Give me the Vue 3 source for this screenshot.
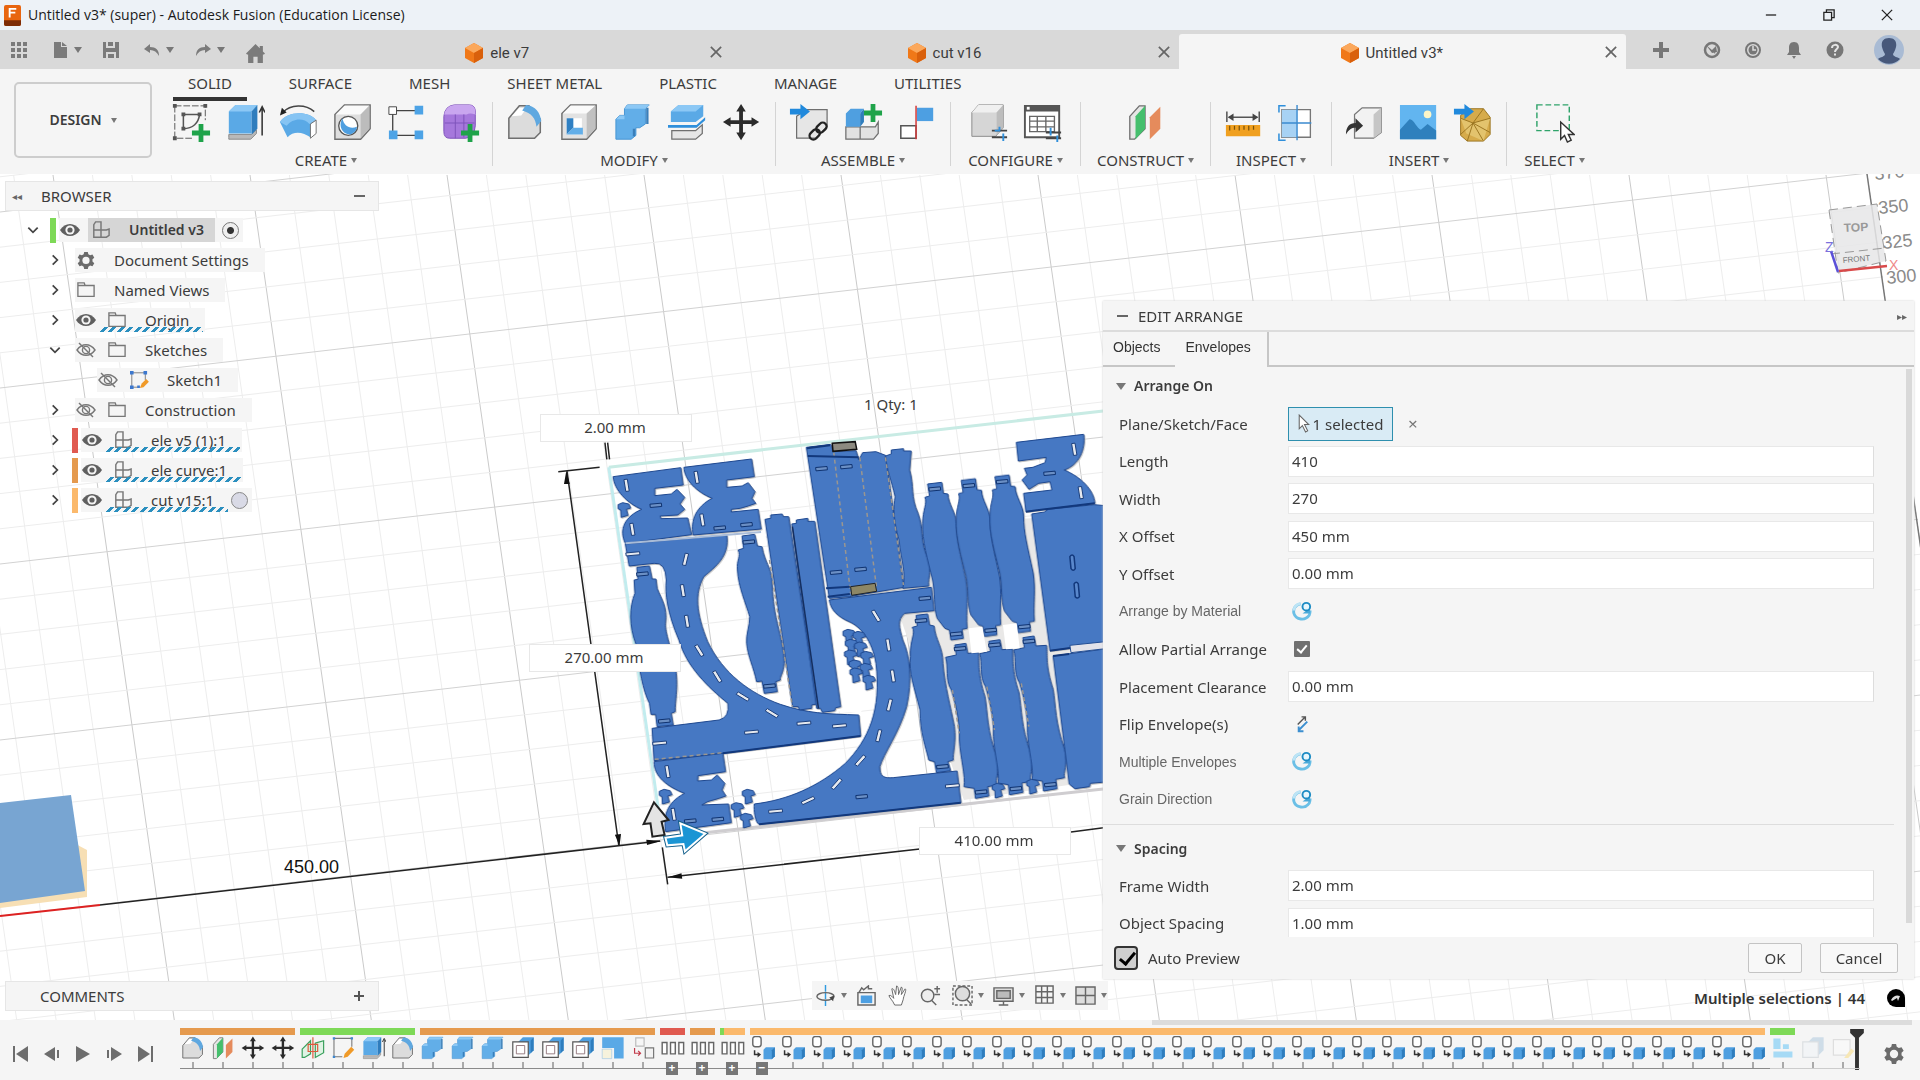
<script setup>
import { ref } from 'vue'

const GREY = '#6f6f6f'

const combine = `<path d="M14 2h23l-4 4v16l-6 4h-4v8l-5 4H2V17l4-4h5V6z" fill="#62aee8" stroke="#4593d3"/><path d="M14 2h23l-4 4H11zM6 13h5v4H2z" fill="#8cc8f5"/><path d="M35 5v17M21 27v8" stroke="#3a7fba" stroke-width="2.500" fill="none"/>`
const fillet = `<path d="M3 16L14 3h10l12 14v14l-6 6H3z" fill="#dcdcdc" stroke="${GREY}" stroke-width="1.6"/><path d="M6 14l8-9h8l-6 8z" fill="#fff"/><path d="M21 2c10 1 15 8 16 17l-5 6c-1-9-5-14-15-17z" fill="#5fa8e0"/>`
const move = `<path d="M20 1l5 8h-3v9h9v-3l8 5-8 5v-3h-9v9h3l-5 8-5-8h3v-9H9v3l-8-5 8-5v3h9V9h-3z" fill="#2b2b2b"/>`
const extrude = `<path d="M4 36v-3h24l5-5v4l-6 6H4z" fill="#b9b9b9" stroke="#888"/><path d="M4 9l7-7h23l-6 7v23H4z" fill="#5aa9e6"/><path d="M4 9l7-7h23l-6 7z" fill="#8cc8f5"/><path d="M28 9l6-7v25l-6 6z" fill="#2f7dbd"/><path d="M39 34V6m-3 4l3-6 3 6" stroke="#333" stroke-width="1.6" fill="none"/>`
const planes = `<path d="M4 14L14 3h6v24L9 38H4z" fill="#e6e6e6" stroke="${GREY}" stroke-width="1.4"/><path d="M10 14l10-11v24L10 38z" fill="#45bf6d"/><path d="M25 15L36 4v23L25 38z" fill="#e58b5c"/>`
const sketch = `<path d="M5 4h30v14M5 4v31h14" fill="none" stroke="#777" stroke-width="1.8"/><path d="M3 2h4v4H3zM33 2h4v4h-4zM3 33h4v4H3z" fill="#3c86cf"/>`

const icons = {
  sketchNew: `<path d="M4 3h32v15M4 3v34h20" fill="none" stroke="#555" stroke-dasharray="7 2"/><path d="M2 1h4v4H2zM34 1h4v4h-4zM2 35h4v4H2z" fill="#555"/><path d="M13 12h17c-1 9-7 15-17 15z" fill="none" stroke="#555" stroke-width="1.6"/><path d="M11 10h4v4h-4zM28 10h4v4h-4zM11 25h4v4h-4z" fill="#555"/><path d="M29 22h5v7h7v5h-7v7h-5v-7h-7v-5h7z" fill="#1fa34a"/>`,
  extrude, fillet, combine, move, planes, sketch,
  revolve: `<path d="M1 20C8 8 32 8 39 18l-6 18c-8-6-18-7-24 0z" fill="#5aa9e6"/><path d="M1 20C8 8 32 8 39 18l-7 4C26 15 14 16 8 24z" fill="#86c4f3"/><path d="M39 18v14l-6 5V22z" fill="#fff" stroke="${GREY}"/><path d="M4 10C12 1 28 1 37 9" fill="none" stroke="#444" stroke-width="1.6"/><path d="M1 13l2-8 5 5z" fill="#222"/>`,
  hole: `<path d="M2 12L12 2h27v25L29 38H2z" fill="#dedede" stroke="${GREY}" stroke-width="1.5"/><path d="M3 12L12 3h26l-9 9z" fill="#fafafa"/><path d="M29 12l9-9v24l-9 10z" fill="#bcbcbc"/><circle cx="16" cy="24" r="10" fill="#fff" stroke="#555" stroke-width="1.4"/><path d="M10 16c-5 8 0 17 8 17 4-1 7-4 7-8-7 3-14-1-15-9z" fill="#4f9fe0"/>`,
  pattern: `<path d="M6 8h26M6 8v26h26" stroke="#444" stroke-width="1.4" fill="none"/><path d="M2 4h8v8H2z" fill="#fff" stroke="#444"/><path d="M29 3h9v9h-9zM2 29h9v9H2zM29 29h9v9h-9z" fill="#4da3e6"/>`,
  form: `<path d="M3 14Q4 3 14 2h16q7 0 6 10v12q-1 12-10 13H9q-6 0-6-7z" fill="#a678dc" stroke="#7b4fb8"/><path d="M3 14Q4 3 14 2h16q7 0 6 10-6-2-9 0H3z" fill="#c9a6ef"/><path d="M4 21h31M15 12v25M24 12v24" stroke="#7d52ba" fill="none"/><path d="M28 22h5v7h7v5h-7v7h-5v-7h-7v-5h7z" fill="#1fa34a"/>`,
  shell: `<path d="M2 11L11 2h27v25L28 38H2z" fill="#e2e2e2" stroke="${GREY}" stroke-width="1.5"/><path d="M3 11L11 3h26l-9 8z" fill="#fafafa"/><path d="M28 11l9-8v24l-9 10z" fill="#c0c0c0"/><path d="M7 16h16v17H7z" fill="#fff"/><path d="M7 16h7v10l-7 7z" fill="#2f80c3"/><path d="M7 33l7-7h10v7z" fill="#62aee8"/>`,
  split: `<path d="M3 9l8-7h26v12l-8 6H3z" fill="#5aa9e6"/><path d="M3 9l8-7h26l-8 7z" fill="#8cc8f5"/><path d="M0 23h30l9-8v3l-9 8H0z" fill="#2f8fdb"/><path d="M4 29h25l7-6v9l-7 6H4z" fill="#e6e6e6" stroke="${GREY}" stroke-width="1.3"/>`,
  insertLink: `<path d="M8 14L18 7h22v18L28 37H8z" fill="#e6e6e6" stroke="${GREY}" stroke-width="1.3"/><path d="M1 6h11V1l10 8-10 8v-5H1z" fill="#2089dc"/><g fill="none" stroke="#222" stroke-width="2.4"><rect x="30" y="20" width="8" height="12" rx="4" transform="rotate(45 34 26)"/><rect x="23" y="27" width="8" height="12" rx="4" transform="rotate(45 27 33)"/></g>`,
  newComp: `<path d="M3 25h15v13H3zM18 25h16l3-5v12l-5 6H18z" fill="#e2e2e2" stroke="${GREY}" stroke-width="1.3"/><path d="M3 11l5-5h14l-4 5v14H3z" fill="#4f9fe0"/><path d="M18 11l4-5v14l-4 5z" fill="#2f7dbd"/><path d="M29 1h5v7h7v5h-7v7h-5v-7h-7V8h7z" fill="#1fa34a"/>`,
  joint: `<path d="M21 5h17v14H21z" fill="#4d9fe2"/><path d="M4 24h16v13H4z" fill="#fff" stroke="#555" stroke-width="1.6"/><path d="M20 3v35" stroke="#d23b3b" stroke-width="1.6"/>`,
  configure: `<path d="M3 10l7-8h26v24l-8 9H3z" fill="#d6d6d6" stroke="#8a8a8a"/><path d="M3 10l7-8h26l-7 8z" fill="#f0f0f0"/><path d="M29 10l7-8v24l-7 8z" fill="#bdbdbd"/><path d="M24 29h16M24 36h16" stroke="#444" stroke-width="2"/><path d="M27 29h5v-4M36 32v8" stroke="#2f8fdb" stroke-width="2" fill="none"/>`,
  configTable: `<path d="M2 3h36v33H2z" fill="#fff" stroke="#555" stroke-width="2"/><path d="M2 2h36v7H2z" fill="#555"/><path d="M4 4h3v3H4z" fill="#fff"/><path d="M7 14h26v16H7zM7 19h26M7 25h26M15 14v16M24 14v16" stroke="#666" stroke-width="1.4" fill="none"/><path d="M24 31h16M24 37h16" stroke="#444" stroke-width="2"/><path d="M29 26v8M36 34v7" stroke="#2f8fdb" stroke-width="2"/>`,
  measure: `<path d="M2 23h36v12H2z" fill="#f0a020"/><path d="M6 24v5m5-5v4m5-4v5m5-5v4m5-4v5m5-5v4" stroke="#7a5208" stroke-width="1.3"/><path d="M3 9v11M37 9v11M5 15h30" stroke="#555" stroke-width="1.6"/><path d="M4 15l6-4v8zM36 15l-6-4v8z" fill="#444"/>`,
  section: `<path d="M4 7h30v29H4z" fill="#fff" stroke="#777" stroke-width="1.4"/><path d="M4 7h16v29H4z" fill="#a7d2f4"/><path d="M4 21h31M20 2v37" stroke="#3b8bd0" stroke-width="1.5"/><path d="M1 10V3h7M1 32v7h7" fill="none" stroke="#2f8fdb" stroke-width="1.6"/>`,
  insertDerive: `<path d="M10 12l8-7h20v26l-8 6H10z" fill="#f2f2f2" stroke="#777" stroke-width="1.3"/><path d="M30 12l8-7v26l-8 6z" fill="#c6c6c6"/><path d="M1 33c0-8 4-12 10-12v-5l8 8-8 7v-5c-4 0-7 2-10 7z" fill="#333"/>`,
  picture: `<path d="M1 2h38v36H1z" fill="#62b5f0"/><circle cx="30" cy="12" r="4" fill="#fdf6c8"/><path d="M1 38V28l10-11c4-1 8 10 12 11l7-6 9 7v9z" fill="#2f80bd"/>`,
  mesh: `<path d="M8 13l10-7h14l7 9v18l-7 7H15l-7-6z" fill="#d6ab4b" stroke="#9a7420"/><path d="M8 16l13 5 18-5-7 24-18-8z" fill="#e3c36d"/><path d="M8 16l13 5 18-5M21 21l11-15M21 21l-6 19M8 33l13-12 18 10M32 40L21 21" stroke="#9a7420" fill="none"/><path d="M1 6h11V1l10 8-10 8v-5H1z" fill="#2089dc"/>`,
  select: `<path d="M2 2h34v27H2z" fill="none" stroke="#2fa36a" stroke-width="1.5" stroke-dasharray="6 3"/><path d="M27 20v18l4-4 3 7 4-2-3-6h6z" fill="#fff" stroke="#333" stroke-width="1.5"/>`,
  sketchEdit: sketch + `<path d="M21 37l2-7 11-12 5 5-11 12z" fill="#f09a28"/>`,
  mirror: `<path d="M2 22L16 8v22L6 36H2zM24 12l14-4v20l-14 8z" fill="#dff3e4" stroke="#39a05c" stroke-width="2"/><path d="M12 14h16v12H12zM20 2v36" fill="none" stroke="#dc5a3c" stroke-width="2"/>`,
  offsetBox: `<path d="M12 10l8-8h18v22l-8 8z" fill="#4f9fe0"/><path d="M33 8l5-6v22l-5 5z" fill="#2f7dbd"/><path d="M3 10h26v26H3z" fill="#fff" stroke="#555" stroke-width="2"/><path d="M9 16h14v14H9z" fill="none" stroke="#8b6f75" stroke-width="1.500"/>`,
  corner: `<path d="M2 2h36v36H22V20H2z" fill="#5aa9e6"/><path d="M2 22h16v16H2z" fill="#f6f2dc" stroke="#9ac4e4"/>`,
  linked: `<path d="M8 3h14v14H8z" fill="#f6f6f6" stroke="#bbb" stroke-width="2"/><path d="M24 20h14v17H24z" fill="#f2f2f2" stroke="#777" stroke-width="2"/><path d="M6 20v9h10m-4-4l4 4-4 4" fill="none" stroke="#c23a4a" stroke-width="2"/>`,
  bundle: `<path d="M2 11h8v19H2zM16 11h8v19h-8zM30 11h8v19h-8z" fill="#fff" stroke="#666" stroke-width="2.4"/>`,
  arranged: `<rect x="3" y="1" width="14" height="17" rx="4" fill="#fff" stroke="#666" stroke-width="2.4"/><path d="M6 24v7h6" stroke="#333" stroke-width="2.500" fill="none"/><path d="M11 27l6 4-6 5z" fill="#333"/><path d="M21 23l4-4h15v15l-5 5H21z" fill="#4f9fe0"/><path d="M35 24l5-5v15l-5 5z" fill="#2f7dbd"/>`,
  arrangeFeature: `<path d="M4 4h12v18H4zM20 14h10v8H20zM4 26h32v10H4z" fill="#a6daf5"/>`,
  ghostBox: `<path d="M12 10l8-8h18v22l-8 8z" fill="#cfdde8"/><path d="M3 10h26v26H3z" fill="#f2f4f6" stroke="#dcdfe2" stroke-width="2"/>`,
  ghostSketch: `<path d="M4 6h28v26H4z" fill="#f8f8f8" stroke="#dedede" stroke-width="2"/><path d="M22 37l12-16 5 4-10 12z" fill="#f7e7b5"/>`,
}

const tabs = ['SOLID', 'SURFACE', 'MESH', 'SHEET METAL', 'PLASTIC', 'MANAGE', 'UTILITIES']
const groups = [
  { name: 'CREATE', tools: ['sketchNew', 'extrude', 'revolve', 'hole', 'pattern', 'form'] },
  { name: 'MODIFY', tools: ['fillet', 'shell', 'combine', 'split', 'move'] },
  { name: 'ASSEMBLE', tools: ['insertLink', 'newComp', 'joint'] },
  { name: 'CONFIGURE', tools: ['configure', 'configTable'] },
  { name: 'CONSTRUCT', tools: ['planes'] },
  { name: 'INSPECT', tools: ['measure', 'section'] },
  { name: 'INSERT', tools: ['insertDerive', 'picture', 'mesh'] },
  { name: 'SELECT', tools: ['select'] },
]
const docs = ['ele v7', 'cut v16', 'Untitled v3*']

const glyphs = {
  eye: `<path d="M0 10C5 2 15 2 20 10 15 18 5 18 0 10z" fill="#5f5f5f"/><circle cx="10" cy="10" r="4.6" fill="#f5f5f5"/><circle cx="10" cy="10" r="2.6" fill="#5f5f5f"/>`,
  hidden: `<path d="M1 10C6 3 14 3 19 10 14 17 6 17 1 10z" fill="none" stroke="#777" stroke-width="1.4"/><circle cx="10" cy="10" r="3.6" fill="none" stroke="#777" stroke-width="1.4"/><path d="M3 3l14 14" stroke="#777" stroke-width="1.4"/>`,
  folder: `<path d="M1 5V2h7l1 3M1 5h18v12H1z" fill="none" stroke="#777" stroke-width="1.5"/>`,
  gear: `<path d="M8 1h4l.6 2.6 2 1.2 2.600-.8 2 3.400-2 1.900v2.400l2 1.900-2 3.400-2.600-.8-2 1.200L12 20H8l-.6-2.600-2-1.200-2.600.8-2-3.400 2-1.900V9.300l-2-1.900 2-3.400 2.600.8 2-1.200z" fill="#6b6b6b"/><circle cx="10" cy="10.500" r="4" fill="#f5f5f5"/>`,
  component: `<path d="M2 10V4l2-3h6v9zM2 10h8v8H2zM10 18v-8h6l3-1v7l-3 2z" fill="none" stroke="#777" stroke-width="1.6"/>`,
  sketch: `<path d="M2 2h15v8M2 2v16h8" fill="none" stroke="#777"/><path d="M0 0h4v4H0zM15 0h4v4h-4zM0 16h4v4H0zM8 16h3v3H8z" fill="#3c78cf"/><path d="M11 19l2-5 5-5 3 3-6 6z" fill="#f09a28"/>`,
}
const tree = [
  { text: 'Untitled v3', level: 'root', open: true, tag: '#7ed957', eye: 'eye', icon: 'component', active: true },
  { text: 'Document Settings', level: 'child', icon: 'gear' },
  { text: 'Named Views', level: 'child', icon: 'folder' },
  { text: 'Origin', level: 'child', eye: 'eye', icon: 'folder', fresh: true },
  { text: 'Sketches', level: 'child', open: true, eye: 'hidden', icon: 'folder' },
  { text: 'Sketch1', level: 'leaf', eye: 'hidden', icon: 'sketch' },
  { text: 'Construction', level: 'child', eye: 'hidden', icon: 'folder' },
  { text: 'ele v5 (1):1', level: 'child', tag: '#e05a50', eye: 'eye', icon: 'component', fresh: true },
  { text: 'ele curve:1', level: 'child', tag: '#e59a4e', eye: 'eye', icon: 'component', fresh: true },
  { text: 'cut v15:1', level: 'child', tag: '#fbb96c', eye: 'eye', icon: 'component', fresh: true, ball: true },
]

const fields = ref([
  { id: 'length', label: 'Length', kind: 'text', value: '410' },
  { id: 'width', label: 'Width', kind: 'text', value: '270' },
  { id: 'xoff', label: 'X Offset', kind: 'text', value: '450 mm' },
  { id: 'yoff', label: 'Y Offset', kind: 'text', value: '0.00 mm' },
  { id: 'material', label: 'Arrange by Material', kind: 'sync' },
  { id: 'partial', label: 'Allow Partial Arrange', kind: 'check', value: true },
  { id: 'clearance', label: 'Placement Clearance', kind: 'text', value: '0.00 mm' },
  { id: 'flip', label: 'Flip Envelope(s)', kind: 'flip' },
  { id: 'multi', label: 'Multiple Envelopes', kind: 'sync' },
  { id: 'grain', label: 'Grain Direction', kind: 'sync' },
])
const spacing = ref([
  { id: 'frame', label: 'Frame Width', value: '2.00 mm' },
  { id: 'object', label: 'Object Spacing', value: '1.00 mm' },
])
const preview = ref(true)

const timeline = [
  { color: '#e59a4e', items: ['fillet', 'planes', 'move', 'move'] },
  { color: '#7ed957', items: ['mirror', 'sketchEdit', 'extrude', 'fillet'] },
  { color: '#e59a4e', items: ['combine', 'combine', 'combine', 'offsetBox', 'offsetBox', 'offsetBox', 'corner', 'linked'] },
  { color: '#e05a50', items: ['bundle'], box: '+' },
  { color: '#e59a4e', items: ['bundle'], box: '+' },
  { color: 'linear-gradient(90deg, #7ed957 4px, #fbb96c 4px)', items: ['bundle'], box: '+' },
  { color: '#fbb96c', items: Array(34).fill('arranged'), box: '−' },
  { color: '#7ed957', items: ['arrangeFeature'] },
  { color: 'transparent', items: ['ghostBox', 'ghostSketch'] },
]

const steps = (n) => Array.from({ length: n }, (_, i) => i)
const columns = steps(56).map((i) => ({ x: -144 - 197 + (i * 197) / 5, major: i % 5 === 0 })).filter((c) => c.x < 1870)
const lines = steps(46).map((i) => ({ y: 36 + (i * 176) / 5, major: i % 5 === 0 }))

const slots = [
  [278, 316, 'v'], [293, 448, 'v'], [461, 292, 'v'], [476, 420, 'v'], [432, 538, 'r'], [425, 632, 'v'], [436, 724, 'v'],
  [468, 812, 'd'], [515, 890, 'd'], [582, 950, 'e'], [658, 1000, 'e'], [742, 1030, 'h'], [835, 1038, 'h'], [605, 1057, 'h'],
  [365, 1090, 'h'], [295, 522, 'h'], [930, 708, 'd'], [962, 795, 'v'], [974, 888, 'v'], [965, 975, 'r'], [937, 1067, 'r'],
  [890, 1142, 's'], [828, 1212, 's'], [753, 1262, 't'], [668, 1294, 'h'], [1130, 1218, 'h'], [1448, 208, 'v'],
  [1465, 338, 'v'], [385, 1175, 'v'], [401, 1303, 'v'],
]
const darkSlots = [
  [355, 376], [522, 444], [592, 434], [788, 266], [853, 260], [826, 577], [890, 568], [1058, 655], [893, 1250], [1384, 280],
  [445, 1323], [517, 1318], [320, 582], [598, 486], [1084, 327], [1173, 317], [1260, 305], [1048, 722], [1150, 806], [1240, 795],
  [1330, 784], [1140, 762], [1230, 751], [1318, 740], [377, 1023], [652, 918], [1104, 1160], [1205, 1236], [1296, 1226], [1386, 1214],
]
const turn = { v: 82, r: 102, d: 62, e: 35, h: -6, s: -52, t: -28 }
const pegs = [[860, 770], [886, 776], [866, 800], [890, 808], [864, 832], [906, 836], [876, 862], [904, 872], [878, 886], [912, 908], [597, 1250], [568, 1290], [592, 1322], [272, 390], [380, 1250], [1250, 1232], [1340, 1220]]
</script>

<template>
  <div class="app">
    <header class="titlebar">
      <svg class="logo" viewBox="0 0 18 22"><rect width="18" height="22" rx="2" fill="#e8650f" /><path d="M0 16h18v4q0 2-2 2H2q-2 0-2-2z" fill="#7c2c06" /><path d="M6 13V4h7M6 8h6" stroke="#fff" stroke-width="2" fill="none" /></svg>
      <span class="grow">Untitled v3* (super) - Autodesk Fusion (Education License)</span>
      <button aria-label="Minimize"><svg viewBox="0 0 14 14"><path d="M1 7h12" /></svg></button>
      <button aria-label="Restore"><svg viewBox="0 0 14 14"><path d="M1 4h9v9H1zM4 4V1h9v9h-3" /></svg></button>
      <button aria-label="Close"><svg viewBox="0 0 14 14"><path d="M1 1l12 12M13 1L1 13" /></svg></button>
    </header>

    <div class="docbar">
      <div class="quick">
        <button aria-label="Data panel"><svg viewBox="0 0 16 16"><path d="M0 0h4v4H0zM6 0h4v4H6zM12 0h4v4h-4zM0 6h4v4H0zM6 6h4v4H6zM12 6h4v4h-4zM0 12h4v4H0zM6 12h4v4H6zM12 12h4v4h-4z" /></svg></button>
        <button class="drop" aria-label="File"><svg viewBox="0 0 16 16"><path d="M2 0h7v5h6v11H2zM10 0l5 4h-5z" /></svg><i class="caret"></i></button>
        <button aria-label="Save"><svg viewBox="0 0 16 16"><path d="M0 0h3v6h9V0h4v16h-3v-6H3v6H0zM5 0h5v4H5zM5 12h6v4H5z" /></svg></button>
        <button class="drop" aria-label="Undo"><svg viewBox="0 0 16 16"><path d="M6 2v3c6 0 9 3 9 9-2-4-5-6-9-6v3L0 7z" /></svg><i class="caret"></i></button>
        <button class="drop" aria-label="Redo"><svg viewBox="0 0 16 16"><path d="M10 2v3c-6 0-9 3-9 9 2-4 5-6 9-6v3l6-4z" /></svg><i class="caret"></i></button>
        <button class="home" aria-label="Home"><svg viewBox="0 0 18 18"><path d="M9 0l4 4V2h3v5l2 2-1 1h-1v8h-5v-6H7v6H2v-8H1L0 9z" /></svg></button>
      </div>
      <div class="docs">
        <div v-for="(d, i) in docs" :key="d" class="doc" :class="{ current: i === 2 }">
          <span class="docname"><svg viewBox="0 0 18 20"><path d="M9 0l9 5v10l-9 5-9-5V5z" fill="#f07818" /><path d="M9 0l9 5-9 5-9-5z" fill="#fba85c" /><path d="M9 10l9-5v10l-9 5z" fill="#d9600c" /></svg>{{ d }}</span>
          <button class="x" aria-label="Close tab"><svg viewBox="0 0 14 14"><path d="M1 1l12 12M13 1L1 13" /></svg></button>
        </div>
      </div>
      <div class="account">
        <button class="add" aria-label="New tab"><svg viewBox="0 0 18 18"><path d="M7 1h4v6h6v4h-6v6H7v-6H1V7h6z" /></svg></button>
        <button aria-label="Extensions"><svg viewBox="0 0 18 18"><circle cx="9" cy="9" r="7" fill="none" stroke="#777" stroke-width="2.500" /><path d="M3 4l6 5 4-4 1 6-5 1zM9 9l4-1-1 5z" /></svg></button>
        <button aria-label="Job status"><svg viewBox="0 0 18 18"><circle cx="9" cy="9" r="7" fill="none" stroke="#777" stroke-width="2" /><circle cx="9" cy="9" r="4.500" /><path d="M9 5v4h3" stroke="#ddd" fill="none" stroke-width="1.500" /></svg></button>
        <button aria-label="Notifications"><svg viewBox="0 0 18 18"><path d="M9 1c4 0 5 3 5 6v4l2 3H2l2-3V7c0-3 1-6 5-6zM7 15h4l-2 3z" /></svg></button>
        <button aria-label="Help"><svg viewBox="0 0 18 18"><circle cx="9" cy="9" r="8.500" /><path d="M6 7c0-4 6-4 6-1 0 2-3 2-3 5m0 1.500v2" stroke="#e5e5e5" stroke-width="2" fill="none" /></svg></button>
        <svg class="avatar" viewBox="0 0 30 30"><circle cx="15" cy="15" r="15" fill="#a9bbd4" /><path d="M15 3c6 0 8 4 7 9-1 4-2 5-3 7 0 3 5 3 7 5a15 15 0 0 1-22 0c2-2 7-2 7-5-1-2-2-3-3-7-1-5 1-9 7-9z" fill="#47587a" /></svg>
      </div>
    </div>

    <div class="ribbon">
      <button class="workspace">DESIGN <i class="caret"></i></button>
      <div class="ribbonmain">
        <nav class="tabs">
          <button v-for="(t, i) in tabs" :key="t" :class="{ on: i === 0 }">{{ t }}</button>
        </nav>
        <div class="groups">
          <div v-for="g in groups" :key="g.name" class="group">
            <div class="tools">
              <button v-for="t in g.tools" :key="t" :aria-label="t"><svg viewBox="0 0 42 42" v-html="icons[t]"></svg></button>
            </div>
            <button class="gname">{{ g.name }}<i class="caret"></i></button>
          </div>
        </div>
      </div>
    </div>

    <main class="canvas">
      <svg class="scene" viewBox="0 174 1920 846" preserveAspectRatio="xMidYMid slice">
        <g fill="none">
          <path v-for="c in columns" :key="'c' + c.x" :d="`M${c.x} 175L${c.x + 122} 1025`" :stroke="c.major ? '#cacaca' : '#ededed'" />
          <path v-for="l in lines" :key="'l' + l.y" :d="`M0 ${l.y}L1990 ${l.y - 229}`" :stroke="l.major ? '#d2d2d2' : '#ededed'" />
          <path d="M1867 174L1990 1030" stroke="#777" stroke-width="1.500" />
        </g>
        <path d="M1868 172L1990 1020h80V150z" fill="#fff" />
        <g class="ticks">
          <text transform="translate(1875 180) rotate(-6)">370</text>
          <text transform="translate(1879 214) rotate(-6)">350</text>
          <text transform="translate(1883 249) rotate(-6)">325</text>
          <text transform="translate(1887 284) rotate(-6)">300</text>
        </g>

        <path d="M0 804L87 850V897L0 908z" fill="#f7dfb4" />
        <path d="M0 803L71 795 85 891 0 903z" fill="#78a5d2" />
        <path d="M0 916L100 905" stroke="#d22" stroke-width="2" />
        <text class="dim" x="284" y="873">450.00</text>
        <path d="M100 905L660 841" stroke="#222" stroke-width="1.500" />

        <g transform="translate(520 380) scale(.38265 .33333)" class="sheet">
          <path d="M232 262L1530 92" stroke="#c8ebe4" stroke-width="3" />
          <path d="M232 262L372 1370" stroke="#c2ecee" stroke-width="3" />
          <path d="M375 1372L1530 1226" stroke="#cfcdd0" stroke-width="3" />
          <path d="M640 470L1525 400V1200L1160 1260 990 700z" fill="#e9e8e7" />
          <path d="M640 500L700 980 890 1000 940 860 860 730 800 660z" fill="#fff" />

          <g class="parts">
            <path d="M243 290L420 263 426 315 352 325V347L395 342 410 328 430 352 418 372 430 388 412 405 366 408 368 416 438 414 448 464 275 490C258 450 272 410 318 388C280 370 246 330 243 290z" />
            <path d="M428 262L605 237 612 290 540 300V322L580 318 596 308 614 335 606 355 616 370 596 378 575 385 552 388V396L622 388 630 447 452 465C445 420 460 380 502 355C460 335 430 300 428 262z" />
            <path d="M275 492L540 465C548 530 510 560 480 590C455 640 460 700 490 785C530 880 600 940 680 973C750 1000 800 1002 885 1005L890 1068 530 1120 350 1142 345 1045 520 1020Q548 1012 543 970C490 920 435 860 415 780C385 700 378 640 382 600Q380 545 350 550L285 558z" />
            <path d="M305 562L338 558 345 597 355 597 358 625C370 660 385 680 380 730C378 760 395 800 408 880C412 930 405 960 405 995L395 1000 400 1035 358 1040 354 1003 342 1003 338 970C320 930 312 870 302 790C285 740 285 680 300 640L298 600 308 598z" />
            <path d="M580 468L613 463 620 498 632 500C640 550 655 560 658 600C660 650 662 680 672 730C682 780 690 810 690 850C688 880 678 890 680 900L668 905 672 935 638 940 632 903 618 905C610 860 595 830 592 790C590 760 600 740 600 710C590 670 570 620 568 570C565 540 578 530 570 510L584 505z" />
            <path d="M640 418L655 415V405L685 402 688 410 702 410 775 972 762 975V985L730 990 727 980 712 980z" />
            <path d="M710 432L722 430V420L752 415V424L770 424 838 980 825 983 822 992 790 997 785 985 775 985z" />
            <path d="M748 202L812 193 818 215 878 212 885 240 895 218 930 215 955 226 1003 622 860 650 808 655z" />
            <path d="M955 228L970 222V210L1002 206V213L1022 213 1018 270C1030 320 1020 350 1040 400C1055 450 1045 470 1060 520C1080 570 1065 590 1068 618L1000 625C1010 580 995 540 990 480C975 420 975 380 980 350C970 300 958 270 955 228z" />
            <path v-for="n in 3" :key="'u' + n" :transform="`translate(${(n - 1) * 88} ${(1 - n) * 11})`" d="M1065 312L1102 307 1106 340 1118 342C1118 370 1140 400 1140 430C1140 480 1150 520 1165 600C1172 650 1165 690 1168 745L1155 748 1158 775 1126 780 1122 750 1110 745 1090 715C1080 680 1085 640 1078 600C1065 540 1050 480 1052 430C1052 390 1065 370 1058 352L1070 348z" />
            <path d="M1035 706L1065 702 1070 735 1082 738C1085 780 1105 800 1105 850C1110 920 1125 980 1135 1040C1140 1090 1130 1120 1132 1140L1118 1145 1125 1172 1088 1178 1083 1145 1068 1140C1060 1100 1045 1060 1045 990C1030 920 1015 880 1020 830C1018 780 1035 760 1025 742L1038 738z" />
            <path v-for="n in 3" :key="'d' + n" :transform="`translate(${(n - 1) * 89} ${(1 - n) * 11})`" d="M1136 795L1165 790 1170 820 1198 818C1200 850 1195 880 1215 950C1222 1000 1220 1050 1245 1130C1255 1180 1240 1200 1245 1215L1222 1220 1225 1248 1190 1255 1187 1225 1160 1220C1165 1190 1150 1130 1148 1080C1150 1020 1135 960 1127 930C1110 900 1120 860 1112 832L1140 825z" />
            <path d="M1297 187L1473 163C1478 210 1460 255 1422 270C1465 290 1500 330 1502 370L1322 395 1316 340 1390 330 1385 305 1355 310 1330 328 1312 300 1325 285 1318 265 1340 262 1372 248 1375 232 1302 243z" />
            <path d="M1337 402L1370 396 1380 388 1500 374 1540 378V790L1385 812z" />
            <path d="M1393 828L1540 805V1205L1490 1210 1488 1220 1450 1226 1435 1212z" />
            <path d="M808 660L1075 622 1082 692 1005 700C985 720 990 740 1000 780C1020 830 1025 900 1010 980C990 1060 950 1120 940 1160C940 1190 950 1195 975 1193L1142 1173 1152 1268 625 1333C615 1330 610 1290 612 1272C700 1260 780 1220 850 1150C910 1080 945 990 930 850C920 780 890 740 860 725C830 710 812 690 808 660z" />
            <path d="M350 1145L530 1120 537 1175 465 1187 464 1203 500 1200 515 1185 535 1210 528 1230 538 1248 520 1255 490 1265 475 1275 545 1272 552 1328 380 1355C375 1310 380 1270 430 1240C385 1220 350 1190 350 1145z" />
            <path v-for="(p, i) in pegs" :key="'p' + i" :transform="`translate(${p[0]} ${p[1]})`" d="M-16 -16L-4 -22 12 -18 17 -6 6 -2 10 16 -8 22 -9 0 -16 -4z" />
          </g>
          <path d="M276 490L630 456" stroke="#a9bcd8" stroke-width="2" />
          <g fill="none" stroke="#9a9690" stroke-width="1.500" stroke-dasharray="4 3">
            <path d="M820 218L864 640M888 232L932 625M955 232L1002 615M352 1138L530 1118M652 540L712 980M1130 930L1148 1060M1220 920L1240 1050M1310 910L1330 1040" />
            <path d="M712 440L780 985" stroke="#152f60" stroke-dasharray="none" />
          </g>
          <path d="M816 190L876 185 880 208 818 214z" fill="#8c8a80" stroke="#111" stroke-width="1.500" />
          <path d="M864 620L928 610 932 634 867 646z" fill="#8d8766" stroke="#222" />
          <path d="M750 205L810 196M752 228L885 232M800 625L862 620M804 650L862 642M1385 812L1530 790M1393 828L1435 822M625 1333L1152 1268M890 1068L530 1120M1322 395L1502 370" fill="none" stroke="#12387c" stroke-width="2" />
          <path d="M1172 745L1208 740 1220 815 1180 820zM1262 735L1298 730 1306 805 1270 808z" fill="#fff" />
          <path d="M1437 796L1530 785V806L1440 818z" fill="#e3e3ea" stroke="#234e93" />
          <rect v-for="(s, i) in slots" :key="'s' + i" x="-18" y="-5" width="36" height="9" fill="#e6e9ee" stroke="#1c3f7c" :transform="`translate(${s[0]} ${s[1]}) rotate(${turn[s[2]]})`" />
          <rect v-for="(s, i) in darkSlots" :key="'k' + i" x="-15" y="-5" width="30" height="10" fill="#6b8fc4" stroke="#0f326f" :transform="`translate(${s[0]} ${s[1]}) rotate(-6)`" />
          <path d="M1437 530Q1443 520 1448 530L1451 566Q1446 576 1440 566zM1448 612Q1454 602 1459 612L1462 650Q1457 658 1451 650z" fill="#5a88cc" stroke="#12387c" stroke-width="1.500" />

          <g stroke="#222" stroke-width="1.500" fill="none">
            <path d="M100 275L208 262M123 275L258 1395M222 188L227 238M229 188L234 238M372 1402L386 1513M386 1492L1045 1407M1440 1356L1540 1341" />
          </g>
          <path d="M121 272L130 312 115 312zM260 1398L248 1364 264 1362zM370 1383L330 1379 332 1395zM386 1492L422 1480 424 1496z" fill="#111" />
          <path d="M350 1267L323 1332 341 1330 346 1370 378 1365 370 1325 388 1320z" fill="#e4e4e4" stroke="#222" stroke-width="2" />
          <path d="M380 1373L424 1366 419 1330 484 1361 431 1414 427 1392 385 1396z" fill="#1b95d4" stroke="#14608c" stroke-width="4" />
          <path d="M380 1373L424 1366 419 1330 484 1361 431 1414 427 1392 385 1396z" fill="#1b95d4" stroke="#fff" stroke-width="2" />
        </g>
      </svg>

      <div class="qty">1 Qty: 1</div>
      <input class="dimbox frame" aria-label="Frame width" value="2.00 mm" />
      <input class="dimbox height" aria-label="Envelope width" value="270.00 mm" />
      <input class="dimbox length" aria-label="Envelope length" value="410.00 mm" />

      <svg class="cube" viewBox="0 0 100 100">
        <path d="M22 23L70 17 79 74 31 86z" fill="#e6e6e8" fill-opacity=".85" stroke="#999" stroke-dasharray="9 5" />
        <path d="M24 67L78 61" stroke="#999" stroke-dasharray="9 5" fill="none" />
        <path d="M32 84L80 79" stroke="#d94a4a" stroke-width="2.500" /><path d="M24 64L31 85" stroke="#5a50d8" stroke-width="2.500" />
        <text x="37" y="45" transform="rotate(-3 37 45)" class="face">TOP</text>
        <text x="36" y="76" transform="rotate(-5 36 76)" class="small">FRONT</text>
        <text x="18" y="65" fill="#7a70dc" class="axis">Z</text><text x="82" y="83" fill="#e88" class="axis">X</text>
      </svg>

      <section class="browser">
        <div class="bar"><span class="fold">◂◂</span><span class="grow">BROWSER</span><button aria-label="Collapse"><i class="minus"></i></button></div>
        <ul>
          <li v-for="n in tree" :key="n.text" :class="n.level">
            <button class="chev" :class="{ open: n.open, none: n.level === 'leaf' }" aria-label="Expand"><svg viewBox="0 0 12 12"><path d="M4 2l4 4-4 4" /></svg></button>
            <i v-if="n.tag" class="tag" :style="{ background: n.tag }"></i>
            <div class="node" :class="{ active: n.active }">
              <svg v-if="n.eye" class="eye" viewBox="0 0 20 20" v-html="glyphs[n.eye]"></svg>
              <div class="label" :class="{ fresh: n.fresh }">
                <svg viewBox="0 0 20 20" v-html="glyphs[n.icon]"></svg>
                <span>{{ n.text }}</span>
              </div>
              <input v-if="n.active" type="radio" name="activate" checked aria-label="Active component" />
              <i v-if="n.ball" class="ball"></i>
            </div>
          </li>
        </ul>
      </section>

      <section class="comments bar"><span class="grow">COMMENTS</span><button aria-label="Add comment"><svg viewBox="0 0 12 12"><path d="M6 1v10M1 6h10" stroke="#555" stroke-width="2" /></svg></button></section>

      <div class="nav">
        <button aria-label="Orbit"><svg viewBox="0 0 22 22"><path d="M11 0v22" stroke="#2f9be0" stroke-width="1.500" stroke-dasharray="7 1" /><ellipse cx="11" cy="12" rx="9" ry="4" /><path d="M15 13l4 4 1-6z" fill="#444" stroke="none" /></svg><i class="caret"></i></button>
        <button aria-label="Look at"><svg viewBox="0 0 22 22"><path d="M2 8h18v13H2zM3 8l3-5 2 2 5-4v3h4" /><path d="M5 11h12v8H5z" fill="#4d9fe2" stroke="none" /></svg></button>
        <button aria-label="Pan"><svg viewBox="0 0 22 22"><path d="M7 21C5 16 1 13 1 11c2-1 4 2 5 3L4 4c2-1 3 3 4 6l1-9c2 0 2 5 2 9l3-8c2 1 0 5 0 8l4-6c2 1-2 8-2 11l-2 6z" fill="#fff" stroke-width="1" /></svg></button>
        <button aria-label="Zoom"><svg viewBox="0 0 22 22"><circle cx="8" cy="11" r="6.500" fill="#eee" /><path d="M12 16l5 5M18 1v7M15 4h6M15 10h6" /></svg></button>
        <button aria-label="Fit"><svg viewBox="0 0 22 22"><path d="M1 1h20v20H1z" stroke-dasharray="3 2" /><circle cx="11" cy="9" r="7.500" fill="#ddd" /><path d="M15 15l5 5" /></svg><i class="caret"></i></button>
        <button aria-label="Display settings"><svg viewBox="0 0 22 22"><path d="M1 3h20v14H1z" fill="#ddd" /><path d="M4 6h14v8H4z" fill="#bbb" /><path d="M6 21h10M11 17v4" /></svg><i class="caret"></i></button>
        <button aria-label="Grid"><svg viewBox="0 0 22 22"><path d="M2 1h18v18H2zM8 1v18M14 1v18M2 7h18M2 13h18" /></svg><i class="caret"></i></button>
        <button aria-label="Viewports"><svg viewBox="0 0 22 22"><path d="M1 2h20v18H1zM11 2v18M1 11h20" fill="#ddd" /></svg><i class="caret"></i></button>
      </div>

      <p class="status">Multiple selections | 44 <svg viewBox="0 0 18 18"><path d="M9 0a9 9 0 0 1 9 9v9H9A9 9 0 0 1 9 0z" /><path d="M4 11c3-5 6-5 9-4l-2 5-1-3-5 3z" fill="#ddd" /></svg></p>

      <form class="dialog" @submit.prevent>
        <div class="dhead"><i class="minus"></i><span class="grow">EDIT ARRANGE</span><span class="fold">▸▸</span></div>
        <div class="dtabs"><button type="button">Objects</button><button type="button" class="sel">Envelopes</button><span class="grow rule"></span></div>
        <div class="dbody">
          <h3><i class="tri"></i>Arrange On</h3>
          <div class="rows">
            <div class="row">
              <label for="plane">Plane/Sketch/Face</label>
              <button id="plane" type="button" class="picked"><svg viewBox="0 0 12 18"><path d="M1 1v13l3-3 3 6 2-1-3-6h4z" /></svg>1 selected</button>
              <button type="button" class="clear" aria-label="Clear">×</button>
            </div>
            <div v-for="f in fields" :key="f.id" class="row" :class="f.kind">
              <label :for="f.id">{{ f.label }}</label>
              <input v-if="f.kind === 'text'" :id="f.id" v-model="f.value" type="text" />
              <input v-else-if="f.kind === 'check'" :id="f.id" v-model="f.value" type="checkbox" />
              <button v-else :id="f.id" type="button" class="ic">
                <svg v-if="f.kind === 'sync'" viewBox="0 0 22 22"><path d="M9 3C3 4 1 9 2 13c2 7 12 8 16 2 1-2 1-3 1-5" fill="none" stroke="#6bbfe6" stroke-width="3" /><path d="M2 10c0-4 3-7 7-7" fill="none" stroke="#bde4f5" stroke-width="3" /><path d="M11 13h8V7z" fill="#4ba9d8" /><circle cx="15" cy="6" r="4" fill="#e8f6fc" stroke="#1e8cc4" stroke-width="2" /></svg>
                <svg v-else viewBox="0 0 22 22"><path d="M6 11l8-8m-4 0h4v4" fill="none" stroke="#555" stroke-width="1.500" /><path d="M16 8l-9 9m0-4v5h5" fill="none" stroke="#3c8fd0" stroke-width="2" /></svg>
              </button>
            </div>
          </div>
          <h3 class="second"><i class="tri"></i>Spacing</h3>
          <div class="rows pair">
            <div v-for="f in spacing" :key="f.id" class="row text"><label :for="f.id">{{ f.label }}</label><input :id="f.id" v-model="f.value" type="text" /></div>
          </div>
          <i class="thumb"></i>
        </div>
        <div class="dfoot">
          <input id="auto" v-model="preview" type="checkbox" /><label for="auto" class="grow">Auto Preview</label>
          <button type="button">OK</button><button type="button">Cancel</button>
        </div>
      </form>
    </main>

    <footer class="timeline">
      <i class="hscroll"></i>
      <div class="play">
        <button aria-label="First"><svg viewBox="0 0 16 16"><path d="M0 0h2v16H0zM15 0v16L3 8z" /></svg></button>
        <button aria-label="Back"><svg viewBox="0 0 16 16"><path d="M11 1v14L0 8zM13 4h2v8h-2z" /></svg></button>
        <button aria-label="Play"><svg viewBox="0 0 16 16"><path d="M1 0l14 8-14 8z" /></svg></button>
        <button aria-label="Forward"><svg viewBox="0 0 16 16"><path d="M5 1v14l11-7zM1 4h2v8H1z" /></svg></button>
        <button aria-label="Last"><svg viewBox="0 0 16 16"><path d="M14 0h2v16h-2zM1 0v16l12-8z" /></svg></button>
      </div>
      <div class="track">
        <div v-for="(g, i) in timeline" :key="i" class="tgroup">
          <i class="strip" :style="{ background: g.color }"></i>
          <div class="cells">
            <div v-for="(t, k) in g.items" :key="k" class="cell">
              <svg viewBox="0 0 42 42" v-html="icons[t]"></svg>
              <b v-if="g.box && k === 0">{{ g.box }}</b><i v-else class="tick"></i>
            </div>
          </div>
        </div>
        <svg class="marker" viewBox="0 0 14 42"><path d="M0 0h14v4l-5 5v33H5V9L0 4z" fill="#333" /></svg>
      </div>
      <button class="settings" aria-label="Timeline settings"><svg viewBox="0 0 20 21" v-html="glyphs.gear"></svg></button>
    </footer>
  </div>
</template>

<style>
body { margin: 0; background: #fff; }
</style>

<style scoped>
* { box-sizing: border-box; }
.app { display: flex; flex-direction: column; min-height: 100vh; font-family: "Noto Sans", sans-serif; font-size: 15px; line-height: 20px; color: #3c3c3c; overflow: hidden; }
button { background: none; border: 0; padding: 0; margin: 0; font: inherit; color: inherit; display: flex; align-items: center; justify-content: center; }
input { font: inherit; color: inherit; margin: 0; }
svg { display: block; flex: none; }
.grow { flex: 1; }
.caret { width: 0; height: 0; border: 4px solid transparent; border-top: 6px solid #777; border-bottom: 0; }

.titlebar { height: 30px; background: #edf2f7; display: flex; align-items: center; padding: 0 20px 0 4px; font-family: "Open Sans", sans-serif; font-size: 14px; color: #1b1b1b; }
.titlebar .logo { width: 17px; height: 21px; margin-right: 7px; }
.titlebar button { width: 26px; margin-left: 32px; }
.titlebar button svg { width: 12px; height: 12px; fill: none; stroke: #222; stroke-width: 1.500; }

.docbar { height: 39px; background: #d9d9d9; display: flex; align-items: stretch; font-family: Roboto, sans-serif; }
.quick { width: 284px; display: flex; align-items: center; padding-left: 11px; gap: 25px; }
.quick svg { width: 16px; height: 16px; fill: #7b7b7b; }
.quick .drop { gap: 6px; margin-right: -4px; }
.quick .home { padding-top: 8px; }
.quick .home svg { width: 19px; height: 19px; }
.docs { flex: 1; display: flex; padding-top: 4px; }
.doc { flex: 1; display: flex; align-items: center; padding-right: 9px; border-radius: 3px 3px 0 0; }
.doc.current { background: #f5f5f5; }
.docname { flex: 1; display: flex; align-items: center; justify-content: center; gap: 7px; padding-top: 2px; }
.docname svg { width: 18px; height: 20px; }
.x svg { width: 12px; height: 12px; fill: none; stroke: #666; stroke-width: 2; }
.account { width: 294px; display: flex; align-items: center; padding-left: 26px; gap: 23px; padding-right: 16px; }
.account svg { width: 18px; height: 18px; fill: #777; }
.account .add { margin-right: 10px; }
.account .avatar { width: 30px; height: 30px; margin-left: auto; }

.ribbon { height: 105px; background: #f5f5f5; display: flex; padding-left: 14px; }
.workspace { width: 138px; height: 76px; margin-top: 13px; border: 2px solid #cdcdcd; border-radius: 5px; font-size: 14px; font-weight: 600; gap: 9px; }
.workspace .caret { border-width: 5px 3px 0; }
.ribbonmain { display: flex; flex-direction: column; padding-left: 6px; }
.tabs { display: flex; gap: 57px; height: 33px; padding-left: 30px; }
.tabs button { height: 32px; padding-top: 2px; padding-bottom: 6px; position: relative; }
.tabs .on::after { content: ""; position: absolute; left: -15px; right: -15px; bottom: 0; height: 4px; background: #333; }
.groups { display: flex; }
.group { padding: 0 6px; border-left: 1px solid #d4d4d4; min-width: 121px; height: 64px; display: flex; flex-direction: column; align-items: center; }
.group:first-child { border: 0; padding-right: 4px; }
.group:nth-child(4), .group:nth-child(5) { min-width: 130px; }
.group:last-child { min-width: 96px; }
.tools { display: flex; }
.tools button { width: 54px; height: 42px; }
.tools svg { width: 40px; height: 40px; }
.gname { gap: 4px; height: 28px; padding-top: 6px; }
.gname .caret { border-width: 5px 3px 0; }

.canvas { flex: 1; position: relative; min-height: 846px; overflow: hidden; background: #fff; }
.scene { position: absolute; inset: 0; width: 100%; height: 100%; }
.sheet path, .sheet rect { vector-effect: non-scaling-stroke; }
.parts { fill: #4678c3; stroke: #1d478f; stroke-width: 1; filter: drop-shadow(2px 3px 2px #bbb); }
.ticks text { font: 18px "Liberation Sans", sans-serif; fill: #8a8a8a; }
.dim { font: 18px "Liberation Sans", sans-serif; fill: #111; }
.dimbox { position: absolute; width: 152px; height: 28px; background: #fff; border: 1px solid #e8e8e8; text-align: center; padding: 0 2px 2px 0; }
.dimbox.frame { left: 540px; top: 240px; }
.dimbox.height { left: 529px; top: 470px; }
.dimbox.length { left: 919px; top: 653px; }
.qty { position: absolute; left: 864px; top: 220px; }
.cube { position: absolute; right: 13px; top: 13px; width: 100px; height: 100px; font-family: "Liberation Sans", sans-serif; fill: none; }
.cube .face { font-size: 12px; font-weight: 700; fill: #999; }
.cube .small { font-size: 8px; fill: #777; }
.cube .axis { font-size: 14px; }

.bar { display: flex; align-items: center; height: 30px; background: #f5f5f5; border: 1px solid #e6e6e6; padding: 0 13px 0 6px; }
.fold { font-size: 10px; color: #666; width: 29px; }
.minus { width: 11px; height: 2px; background: #666; display: block; }
.browser { position: absolute; left: 5px; top: 7px; width: 374px; }
.browser ul { list-style: none; margin: 0; padding: 4px 0 0; }
.browser li { display: flex; align-items: center; height: 30px; }
.root { padding-left: 20px; }
.child { padding-left: 42px; }
.leaf { padding-left: 64px; }
.chev { width: 16px; }
.chev svg { width: 14px; height: 14px; fill: none; stroke: #444; stroke-width: 1.500; }
.chev.open { transform: rotate(90deg); }
.chev.none { visibility: hidden; }
.tag { width: 6px; height: 25px; margin: 0 -7px 0 9px; z-index: 1; }
.tag + .node { margin-left: 10px; }
.node { margin-left: 12px; height: 24px; background: #f5f5f5; display: flex; align-items: center; padding-right: 4px; }
.node svg { width: 20px; height: 20px; margin-left: 1px; }
.eye + .label { margin-left: 8px; }
.label { display: flex; align-items: center; gap: 18px; height: 24px; padding: 0 12px 0 2px; margin-left: -2px; position: relative; }
.label svg { width: 20px; height: 18px; }
.active .label { background: #d6d6d6; font-size: 14px; font-weight: 600; padding: 0 11px 0 2px; }
.label.fresh::after { content: ""; position: absolute; left: -4px; right: -2px; bottom: 0; height: 5px; background: repeating-linear-gradient(135deg, transparent 0 3px, #2a8fbf 3px 6px); }
.node input { width: 17px; height: 17px; margin-left: 7px; appearance: none; border: 1px solid #777; border-radius: 50%; background: radial-gradient(circle, #333 0 3px, #eee 4px); }
.ball { width: 17px; height: 17px; border-radius: 50%; margin-left: 5px; border: 1px solid #888; background: #d9dae6; }
.comments { position: absolute; left: 5px; bottom: 9px; width: 374px; padding-left: 34px; }
.comments svg { width: 12px; height: 12px; }

.nav { position: absolute; left: 812px; bottom: 10px; height: 29px; padding: 0 3px; background: #f5f5f5; display: flex; align-items: center; gap: 11px; }
.nav button { gap: 5px; }
.nav svg { width: 21px; height: 21px; fill: none; stroke: #666; stroke-width: 1.500; }
.nav .caret { border-width: 5px 3px 0; margin-right: -2px; }
.status { position: absolute; right: 15px; bottom: 12px; margin: 0; display: flex; align-items: center; gap: 22px; font-weight: 600; color: #333; }
.status svg { width: 18px; height: 18px; }

.dialog { position: absolute; right: 6px; top: 127px; width: 811px; height: 678px; background: #f5f5f5; display: flex; flex-direction: column; box-shadow: 0 0 2px #ccc; }
.dhead { display: flex; align-items: center; height: 31px; padding-left: 14px; gap: 10px; border-bottom: 2px solid #dcdcdc; flex: none; }
.dhead .fold { width: 17px; }
.dtabs { display: flex; height: 35px; flex: none; font-family: "Liberation Sans", Arial, sans-serif; font-size: 14px; color: #333; }
.dtabs button { padding: 0 15px 3px 10px; border-bottom: 2px solid #c6c6c6; }
.dtabs .sel { border: 0; border-right: 2px solid #c6c6c6; padding: 0 16px 5px 10px; }
.rule { border-bottom: 2px solid #c6c6c6; }
.dbody { flex: 1; min-height: 0; overflow: hidden; position: relative; padding: 9px 40px 0 16px; }
.thumb { position: absolute; right: 2px; top: 2px; bottom: 14px; width: 6px; background: #d9d9d9; }
h3 { margin: 0 0 0 -3px; font-size: 14px; font-weight: 600; height: 20px; display: flex; align-items: center; gap: 8px; }
.tri { border: 5px solid transparent; border-top: 7px solid #777; border-bottom: 0; }
.rows { display: grid; grid-auto-rows: 1fr; height: 413px; margin-top: 9px; }
.rows.pair { height: 75px; margin-top: 8px; }
.second { border-top: 1px solid #ddd; margin: 6px -20px 0 -16px; padding: 13px 0 0 13px; height: 35px; }
.row { display: flex; align-items: center; }
.row label { width: 169px; flex: none; }
.row.sync label { font-family: "Liberation Sans", Arial, sans-serif; font-size: 14px; color: #666; }
.row input[type="text"] { flex: 1; min-width: 0; height: 31px; border: 1px solid #e8e8e8; border-right-color: #ddd; background: #fff; padding: 0 3px 1px; }
.picked { width: 105px; height: 34px; border: 1px solid #2e8fae; background: #d9ebf5; gap: 2px; }
.picked svg { width: 13px; height: 19px; fill: #fff; stroke: #666; }
.clear { font-size: 17px; color: #777; margin-left: 15px; }
.row input[type="checkbox"] { appearance: none; width: 16px; height: 16px; margin-left: 6px; background: #707070; border-radius: 1px; position: relative; }
input[type="checkbox"]:checked::after { content: ""; position: absolute; left: 5px; top: 2px; width: 4px; height: 8px; border: solid #fff; border-width: 0 2px 2px 0; transform: rotate(40deg); }
.ic { margin-left: 4px; }
.ic svg { width: 21px; height: 21px; }
.dfoot { height: 42px; flex: none; display: flex; align-items: center; padding: 0 16px 0 11px; background: #f5f5f5; }
.dfoot input { appearance: none; width: 24px; height: 24px; border: 2px solid #333; border-radius: 4px; background: #cfcfcf; position: relative; margin-right: 10px; }
.dfoot input:checked::after { left: 7px; top: 1px; width: 6px; height: 13px; border-color: #000; border-width: 0 3px 3px 0; }
.dfoot button { border: 1px solid #c4c4c4; border-radius: 2px; height: 30px; width: 54px; background: #f8f8f8; }
.dfoot button:last-child { width: 78px; margin-left: 18px; }

.timeline { height: 60px; background: #f5f5f5; display: flex; position: relative; }
.hscroll { position: absolute; left: 60%; right: 8px; top: 0; height: 5px; background: #dcdcdc; }
.play { width: 180px; display: flex; align-items: center; gap: 15px; padding: 8px 0 0 13px; }
.play svg { width: 16px; height: 16px; fill: #6d6d6d; }
.track { flex: 1; display: flex; padding-top: 8px; }
.tgroup { display: flex; flex-direction: column; }
.strip { height: 7px; margin-right: 5px; display: block; }
.cells { display: flex; }
.cell { width: 30px; height: 34px; position: relative; border-bottom: 1px solid #8a8a8a; }
.tgroup:nth-last-child(-n+3) .cell { border-color: #ccc; }
.cell svg { width: 25px; height: 25px; margin: 1px 0 0 1px; }
.tick { position: absolute; left: 12px; bottom: 0; width: 2px; height: 6px; background: #aaa; }
.cell b { position: absolute; left: 6px; bottom: -7px; width: 12px; height: 13px; background: #777; color: #fff; font-size: 12px; line-height: 12px; text-align: center; }
.marker { width: 16px; height: 41px; margin-left: -11px; margin-top: 1px; }
.settings { padding: 8px 15px 0 0; }
.settings svg { width: 22px; height: 22px; }
</style>
